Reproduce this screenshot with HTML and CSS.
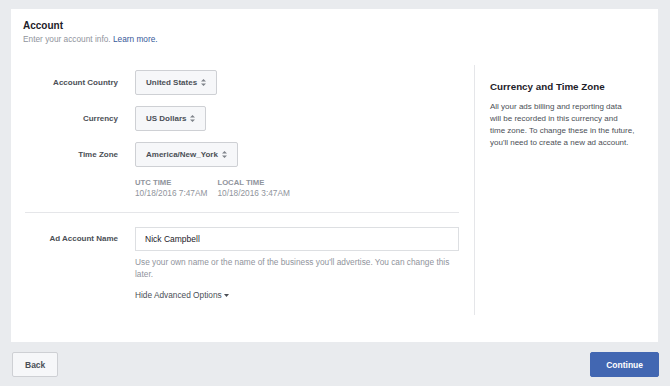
FILE: index.html
```html
<!DOCTYPE html>
<html lang="en">
<head>
  <meta charset="UTF-8" />
  <title>Account</title>
  <link rel="stylesheet" href="styles.css">
</head>
<body>
  <div class="page">
    <div class="card">
      <div class="card-head">
        <h2>Account</h2>
        <p class="sub">Enter your account info. <a href="#">Learn more.</a></p>
      </div>

      <div class="card-body">
        <div class="form">
          <div class="row">
            <label>Account Country</label>
            <div class="select">United States <svg width="5" height="7" viewBox="0 0 5 7"><path d="M2.5 0L5 2.6H0zM2.5 7L0 4.4h5z" fill="#7f838a"/></svg></div>
          </div>
          <div class="row">
            <label>Currency</label>
            <div class="select">US Dollars <svg width="5" height="7" viewBox="0 0 5 7"><path d="M2.5 0L5 2.6H0zM2.5 7L0 4.4h5z" fill="#7f838a"/></svg></div>
          </div>
          <div class="row">
            <label>Time Zone</label>
            <div class="select">America/New_York <svg width="5" height="7" viewBox="0 0 5 7"><path d="M2.5 0L5 2.6H0zM2.5 7L0 4.4h5z" fill="#7f838a"/></svg></div>
          </div>

          <div class="times">
            <div class="time">
              <div class="time-label">UTC Time</div>
              <div class="time-value">10/18/2016 7:47AM</div>
            </div>
            <div class="time">
              <div class="time-label">Local Time</div>
              <div class="time-value">10/18/2016 3:47AM</div>
            </div>
          </div>

          <hr class="divider">

          <div class="row row-top">
            <label>Ad Account Name</label>
            <div class="field">
              <input type="text" value="Nick Campbell">
              <p class="help">Use your own name or the name of the business you'll advertise. You can change this later.</p>
              <a href="#" class="advanced">Hide Advanced Options <svg width="5" height="3" viewBox="0 0 5 3"><path d="M0 0h5L2.5 3z" fill="#4b4f56"/></svg></a>
            </div>
          </div>
        </div>

        <div class="aside">
          <h3>Currency and Time Zone</h3>
          <p>All your ads billing and reporting data will&nbsp;be recorded in this currency and time&nbsp;zone. To change these in the future, you'll need to create a new ad account.</p>
        </div>
      </div>
    </div>

    <div class="footer">
      <button class="btn">Back</button>
      <button class="btn btn-primary">Continue</button>
    </div>
  </div>
</body>
</html>
```

FILE: styles.css
```css
body {
  margin: 0;
  background: #e9ebee;
  font-family: "Liberation Sans", Arial, sans-serif;
  color: #4b4f56;
}

.page {
  padding: 9px 12px 0 11px;
}

.card {
  background: #fff;
  padding: 11px 0 27px;
}

.card-head {
  padding: 0 12px;
}

h2 {
  margin: 0;
  font-size: 10px;
  line-height: 12px;
  color: #1d2129;
}

.sub {
  margin: 1px 0 0;
  font-size: 8.3px;
  line-height: 12px;
  color: #90949c;
}

.sub a {
  color: #365899;
  text-decoration: none;
}

.card-body {
  display: flex;
  margin-top: 20px;
}

.form {
  width: 434px;
  padding: 5px 15px 13px 14px;
  border-right: 1px solid #e5e6e9;
}

.row {
  display: flex;
  align-items: center;
  margin-bottom: 11px;
}

.row label {
  width: 93px;
  margin-right: 17px;
  text-align: right;
  font-size: 8px;
  font-weight: bold;
  color: #4b4f56;
}

.row-top {
  align-items: flex-start;
  margin: 14px 0 0;
}

.row-top label {
  line-height: 24px;
}

.select {
  display: inline-flex;
  align-items: center;
  gap: 4px;
  height: 23px;
  padding: 0 10px;
  background: #f6f7f9;
  border: 1px solid #ced0d4;
  border-radius: 2px;
  font-size: 8px;
  font-weight: bold;
  color: #4b4f56;
}

.times {
  display: flex;
  gap: 10px;
  margin: -1px 0 0 110px;
}

.time-label {
  font-size: 7.7px;
  line-height: 11px;
  font-weight: bold;
  color: #90949c;
  text-transform: uppercase;
}

.time-value {
  font-size: 8.3px;
  line-height: 11px;
  color: #90949c;
}

.divider {
  border: 0;
  border-top: 1px solid #e5e6e9;
  margin: 13px 0 0;
}

.field {
  flex: 1;
}

.field input {
  display: block;
  box-sizing: border-box;
  width: 100%;
  height: 24px;
  margin: 0;
  padding: 0 9px;
  border: 1px solid #dddfe2;
  font-family: inherit;
  font-size: 8.5px;
  color: #1d2129;
  outline: none;
}

.help {
  margin: 5px 0 0;
  font-size: 8.3px;
  line-height: 12px;
  color: #90949c;
}

.advanced {
  display: inline-flex;
  align-items: center;
  gap: 2px;
  margin-top: 9px;
  font-size: 8.3px;
  line-height: 12px;
  color: #4b4f56;
  text-decoration: none;
}

.aside {
  flex: 1;
  padding: 16px 20px 0 15px;
}

.aside h3 {
  margin: 0;
  font-size: 9.8px;
  line-height: 12px;
  color: #1d2129;
}

.aside p {
  margin: 8px 0 0;
  font-size: 8px;
  line-height: 12px;
  color: #4b4f56;
}

.footer {
  display: flex;
  justify-content: space-between;
  margin: 10px -1px 0 1px;
}

.btn {
  height: 25px;
  padding: 0 12px;
  background: #f6f7f9;
  border: 1px solid #ced0d4;
  border-radius: 2px;
  font-family: inherit;
  font-size: 8.5px;
  font-weight: bold;
  color: #4b4f56;
}

.btn-primary {
  padding: 0 15px;
  background: #4267b2;
  border-color: #4267b2;
  color: #fff;
}
```
